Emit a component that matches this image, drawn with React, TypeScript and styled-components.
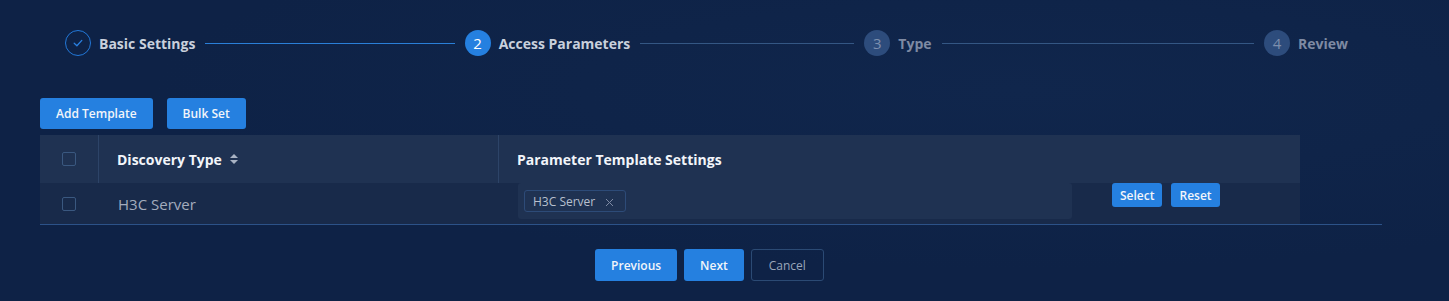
import styled, { createGlobalStyle } from "styled-components";

const GlobalStyle = createGlobalStyle`
  html, body {
    margin: 0;
    padding: 0;
    background: #0e2246;
  }
  body {
    font-family: "Open Sans", "Noto Sans", "Liberation Sans", sans-serif;
  }
`;

const COLOR = {
  bg: "#0e2246",
  blue: "#2580e0",
  headBg: "#1f3252",
  rowBg: "#182a4a",
  inputBg: "#1f3252",
  text: "#c9d0dc",
  dim: "#7e8aa3",
  white: "#f2f5fa",
};

type StepState = "done" | "active" | "wait";

const steps: { title: string; state: StepState }[] = [
  { title: "Basic Settings", state: "done" },
  { title: "Access Parameters", state: "active" },
  { title: "Type", state: "wait" },
  { title: "Review", state: "wait" },
];

const CheckIcon = () => (
  <svg width="12" height="12" viewBox="0 0 12 12" fill="none">
    <path d="M2.2 6.3 L4.9 8.8 L9.8 3.4" stroke="#2a80e0" strokeWidth="1.3" strokeLinecap="round" strokeLinejoin="round" />
  </svg>
);

const SortIcon = () => (
  <svg width="10" height="12" viewBox="0 0 10 12">
    <path d="M5 1 L9 5 H1 Z" fill="#a9b3c4" />
    <path d="M5 11 L9 7 H1 Z" fill="#a9b3c4" />
  </svg>
);

const CloseIcon = () => (
  <svg width="9" height="9" viewBox="0 0 9 9">
    <path d="M1 1 L8 8 M8 1 L1 8" stroke="#7e8aa3" strokeWidth="1" />
  </svg>
);

export default function App() {
  return (
    <Page>
      <GlobalStyle />
      <Steps>
        {steps.map((s, i) => (
          <Step key={s.title} $last={i === steps.length - 1}>
            <StepIcon $state={s.state}>
              {s.state === "done" ? <CheckIcon /> : i + 1}
            </StepIcon>
            <StepTitle $state={s.state}>{s.title}</StepTitle>
            {i < steps.length - 1 && <StepLine $done={s.state === "done"} />}
          </Step>
        ))}
      </Steps>

      <Toolbar>
        <Button>Add Template</Button>
        <Button>Bulk Set</Button>
      </Toolbar>

      <TableWrap>
        <Table>
          <HeadRow>
            <CheckCell $head>
              <Checkbox />
            </CheckCell>
            <HeadCell $w={400} $divider>
              Discovery Type <SortIcon />
            </HeadCell>
            <HeadCell $w={801}>Parameter Template Settings</HeadCell>
          </HeadRow>
          <BodyRow>
            <CheckCell>
              <Checkbox />
            </CheckCell>
            <BodyCell $w={400}>H3C Server</BodyCell>
            <ParamCell>
              <SelectBox>
                <Tag>
                  H3C Server
                  <CloseIcon />
                </Tag>
              </SelectBox>
              <Actions>
                <SmallButton>Select</SmallButton>
                <SmallButton>Reset</SmallButton>
              </Actions>
            </ParamCell>
          </BodyRow>
        </Table>
      </TableWrap>

      <Footer>
        <Button $size="lg">Previous</Button>
        <Button $size="lg">Next</Button>
        <GhostButton>Cancel</GhostButton>
      </Footer>
    </Page>
  );
}

const Page = styled.div`
  width: 1449px;
  height: 301px;
  box-sizing: border-box;
  background: radial-gradient(ellipse at 70% 30%, #10264c 0%, ${COLOR.bg} 60%);
  padding: 30px 67px 0 40px;
  overflow: hidden;
`;

const Steps = styled.div`
  display: flex;
  align-items: center;
  width: 1308px;
  box-sizing: border-box;
  padding-left: 25px;
  height: 26px;
`;

const Step = styled.div<{ $last?: boolean }>`
  display: flex;
  align-items: center;
  flex: ${({ $last }) => ($last ? "none" : "1")};
`;

const StepIcon = styled.div<{ $state: StepState }>`
  width: 26px;
  height: 26px;
  box-sizing: border-box;
  border-radius: 50%;
  display: flex;
  align-items: center;
  justify-content: center;
  font-size: 15px;
  flex: none;
  border: ${({ $state }) => ($state === "done" ? "1px solid #2278d8" : "none")};
  background: ${({ $state }) =>
    $state === "active" ? COLOR.blue : $state === "wait" ? "#2d4c7c" : "transparent"};
  color: ${({ $state }) => ($state === "active" ? "#fff" : "#7d8fae")};
`;

const StepTitle = styled.span<{ $state: StepState }>`
  margin-left: 8px;
  font-size: 14px;
  font-weight: 700;
  white-space: nowrap;
  color: ${({ $state }) => ($state === "wait" ? COLOR.dim : COLOR.text)};
`;

const StepLine = styled.div<{ $done?: boolean }>`
  flex: 1;
  height: 1px;
  margin: 0 10px;
  background: ${({ $done }) => ($done ? "#2a7fd8" : "#345784")};
`;

const Toolbar = styled.div`
  display: flex;
  gap: 14px;
  margin-top: 42px;
`;

const Button = styled.button<{ $size?: "lg" }>`
  height: ${({ $size }) => ($size === "lg" ? "32px" : "31px")};
  padding: 0 16px;
  border: none;
  border-radius: 3px;
  background: ${COLOR.blue};
  color: ${COLOR.white};
  font-family: inherit;
  font-size: 12px;
  font-weight: 600;
  cursor: pointer;
`;

const GhostButton = styled.button`
  height: 32px;
  padding: 0 17px;
  border: 1px solid #2b4a74;
  border-radius: 3px;
  background: transparent;
  color: #9aa6ba;
  font-family: inherit;
  font-size: 12px;
  cursor: pointer;
`;

const TableWrap = styled.div`
  margin-top: 6px;
  border-bottom: 1px solid #2c5288;
`;

const Table = styled.div`
  width: 1260px;
  display: flex;
  flex-direction: column;
`;

const HeadRow = styled.div`
  display: flex;
  height: 48px;
  background: ${COLOR.headBg};
`;

const BodyRow = styled.div`
  display: flex;
  height: 41px;
  background: ${COLOR.rowBg};
`;

const CheckCell = styled.div<{ $head?: boolean }>`
  width: 59px;
  flex: none;
  display: flex;
  align-items: center;
  padding-left: 22px;
  box-sizing: border-box;
  border-right: ${({ $head }) => ($head ? "1px solid #2d4468" : "none")};
`;

const Checkbox = styled.span`
  width: 14px;
  height: 14px;
  box-sizing: border-box;
  border: 1px solid #3a5880;
  border-radius: 2px;
  background: transparent;
`;

const HeadCell = styled.div<{ $w: number; $divider?: boolean }>`
  width: ${({ $w }) => $w}px;
  flex: none;
  box-sizing: border-box;
  display: flex;
  align-items: center;
  gap: 7px;
  padding-left: 18px;
  font-size: 14px;
  font-weight: 700;
  color: ${COLOR.white};
  border-right: ${({ $divider }) => ($divider ? "1px solid #2d4468" : "none")};
`;

const BodyCell = styled.div<{ $w: number }>`
  width: ${({ $w }) => $w}px;
  flex: none;
  box-sizing: border-box;
  display: flex;
  align-items: center;
  padding-left: 19px;
  font-size: 15px;
  color: #a3acbd;
`;

const ParamCell = styled.div`
  flex: 1;
  display: flex;
  align-items: flex-start;
  padding-left: 19px;
`;

const SelectBox = styled.div`
  width: 554px;
  height: 36px;
  box-sizing: border-box;
  background: ${COLOR.inputBg};
  border-radius: 3px;
  display: flex;
  align-items: center;
  padding-left: 6px;
`;

const Tag = styled.span`
  height: 22px;
  box-sizing: border-box;
  display: inline-flex;
  align-items: center;
  gap: 10px;
  padding: 0 11px 0 8px;
  border: 1px solid #2d4b78;
  border-radius: 3px;
  font-size: 12px;
  color: #b8c0ce;

  svg {
    margin-top: 3px;
  }
`;

const Actions = styled.div`
  display: flex;
  gap: 9px;
  margin-left: 40px;
`;

const SmallButton = styled.button`
  height: 24px;
  padding: 0 8px;
  border: none;
  border-radius: 3px;
  background: ${COLOR.blue};
  color: ${COLOR.white};
  font-family: inherit;
  font-size: 12px;
  font-weight: 600;
  cursor: pointer;
`;

const Footer = styled.div`
  display: flex;
  justify-content: center;
  gap: 7px;
  margin-top: 24px;
  width: 1339px;
`;
